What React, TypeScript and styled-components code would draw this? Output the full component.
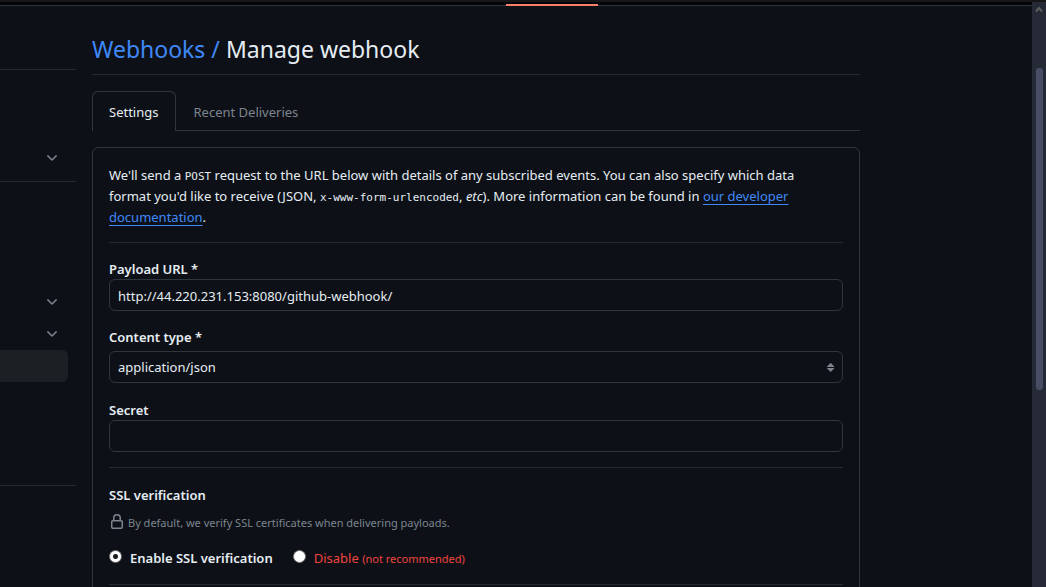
import React from "react";
import styled, { createGlobalStyle } from "styled-components";

const color = {
  bg: "#0d1117",
  text: "#e6edf3",
  muted: "#7d8590",
  border: "#30363d",
  divider: "#252a31",
  link: "#4088f7",
  danger: "#f0443e",
};

const GlobalStyle = createGlobalStyle`
  * { box-sizing: border-box; }
  body {
    margin: 0;
    background: ${color.bg};
    color: ${color.text};
    font: 13px/21px "Noto Sans", "Open Sans", sans-serif;
  }
  input, select, button { font: inherit; color: inherit; }
`;

const Window = styled.div`
  height: 100vh;
  display: flex;
  flex-direction: column;
  overflow: hidden;
`;

const BrowserEdge = styled.div`
  flex: none;
  height: 2px;
  background: #161616;
`;

const Viewport = styled.div`
  flex: 1;
  min-height: 0;
  display: flex;
`;

const Page = styled.div`
  flex: 1;
  min-width: 0;
  overflow: hidden;
`;

const RepoNav = styled.nav`
  height: 4px;
  display: flex;
  align-items: flex-end;
  background: #02040a;
  border-bottom: 1px solid ${color.border};
`;

const ActiveMark = styled.span`
  width: 92px;
  height: 2px;
  margin: 0 0 -1px 49%;
  background: #f78166;
`;

const Columns = styled.div`
  display: flex;
  gap: 16px;
`;

const Sidebar = styled.aside`
  flex: none;
  width: 76px;
`;

const NavGroup = styled.section<{ $height: number }>`
  display: flex;
  flex-direction: column;
  justify-content: flex-end;
  height: ${(p) => p.$height}px;
  border-bottom: 1px solid ${color.divider};
`;

const NavToggle = styled.button`
  display: flex;
  align-items: center;
  justify-content: flex-end;
  height: 32px;
  margin: 0 8px 0 0;
  padding: 0 8px;
  border: 0;
  background: none;
  color: ${color.muted};
`;

const NavCurrent = styled.a`
  display: block;
  height: 32px;
  margin-right: 8px;
  border-radius: 0 6px 6px 0;
  background: #1c2024;
`;

const NavSpace = styled.div<{ $height: number }>`
  height: ${(p) => p.$height}px;
`;

const Icon = styled.svg`
  flex: none;
  display: block;
  width: 16px;
  height: 16px;
  fill: currentColor;
`;

const Main = styled.main`
  flex: 1;
  min-width: 0;
  max-width: 768px;
  padding-top: 24px;
`;

const Title = styled.h1`
  margin: 0 0 16px;
  padding-bottom: 6px;
  border-bottom: 1px solid ${color.divider};
  font-size: 23px;
  line-height: 38px;
  font-weight: 400;
`;

const TitleLink = styled.a`
  color: ${color.link};
  text-decoration: none;
`;

const Tabs = styled.div`
  display: flex;
  margin-bottom: 16px;
  border-bottom: 1px solid ${color.border};
`;

const Tab = styled.button<{ $active?: boolean }>`
  height: 40px;
  margin-bottom: -1px;
  padding: 2px 17px 0 16px;
  border: 1px solid ${(p) => (p.$active ? color.border : "transparent")};
  border-bottom: 0;
  border-radius: 6px 6px 0 0;
  background: ${(p) => (p.$active ? color.bg : "transparent")};
  color: ${(p) => (p.$active ? color.text : color.muted)};
`;

const Card = styled.form`
  padding: 16px 16px 80px;
  border: 1px solid ${color.border};
  border-radius: 6px;
`;

const Intro = styled.p`
  margin: 0 0 14px;
  padding: 1px 16px 0 0;
`;

const Code = styled.code`
  font-family: "DejaVu Sans Mono", monospace;
  font-size: 11px;
  line-height: 11px;
`;

const TextLink = styled.a`
  color: ${color.link};
  text-decoration: underline;
  text-decoration-skip-ink: none;
  text-underline-offset: 3px;
`;

const Divider = styled.hr`
  height: 1px;
  margin: 15px 0;
  border: 0;
  background: ${color.divider};
  ${Intro} + & {
    margin-top: 0;
  }
`;

const Field = styled.div<{ $gap?: number }>`
  display: flex;
  flex-direction: column;
  gap: ${(p) => p.$gap ?? 0}px;
  & + & {
    margin-top: 15px;
  }
`;

const Label = styled.label`
  padding-top: 2px;
  line-height: 19px;
  font-weight: 600;
`;

const Input = styled.input`
  width: 100%;
  height: 32px;
  padding: 2px 8px 0;
  border: 1px solid ${color.border};
  border-radius: 6px;
  background: ${color.bg};
`;

const SelectBox = styled.div`
  display: grid;
  align-items: center;
  margin-bottom: 1px;
  > * {
    grid-area: 1 / 1;
  }
  > svg {
    justify-self: end;
    margin-right: 4px;
    color: ${color.muted};
    pointer-events: none;
  }
`;

const Select = styled.select`
  appearance: none;
  width: 100%;
  height: 32px;
  padding: 0 24px 0 8px;
  border: 1px solid ${color.border};
  border-radius: 6px;
  background: ${color.bg};
`;

const SectionTitle = styled.h2`
  margin: 0 0 8px;
  padding-top: 2px;
  font-size: 13px;
  line-height: 21px;
  font-weight: 600;
`;

const Note = styled.p`
  display: flex;
  align-items: flex-start;
  gap: 3px;
  margin: 0 0 16px;
  font-size: 11px;
  line-height: 18px;
  color: ${color.muted};
`;

const Options = styled.div`
  display: flex;
  gap: 20px;
`;

const Option = styled.label<{ $danger?: boolean }>`
  display: flex;
  align-items: center;
  gap: 8px;
  font-weight: ${(p) => (p.$danger ? 400 : 600)};
  color: ${(p) => (p.$danger ? color.danger : color.text)};
`;

const Radio = styled.input`
  appearance: none;
  flex: none;
  width: 13px;
  height: 13px;
  margin: 0 0 4px;
  border: 1px solid #767676;
  border-radius: 50%;
  background: #fff;
  &:checked {
    background: radial-gradient(circle, #1c1c1c 2px, #fff 3px);
  }
`;

const Small = styled.small`
  font-size: 11px;
`;

const ScrollTrack = styled.div`
  flex: none;
  display: flex;
  flex-direction: column;
  align-items: center;
  width: 14px;
  background: #262a36;
`;

const ScrollArrow = styled.svg`
  width: 8px;
  height: 8px;
  margin: 3px 0 55px;
  fill: none;
  stroke: #606060;
  stroke-width: 2;
`;

const ScrollThumb = styled.div`
  width: 7px;
  height: 55%;
  border-radius: 3px;
  background: #494d64;
`;

const Chevron = () => (
  <Icon viewBox="0 0 16 16" aria-hidden="true">
    <path d="M12.78 5.22a.749.749 0 0 1 0 1.06l-4.25 4.25a.749.749 0 0 1-1.06 0L3.22 6.28a.749.749 0 1 1 1.06-1.06L8 8.939l3.72-3.719a.749.749 0 0 1 1.06 0Z" />
  </Icon>
);

const Toggle = ({ label }: { label: string }) => (
  <NavToggle type="button" aria-label={label}>
    <Chevron />
  </NavToggle>
);

export default function App() {
  return (
    <Window>
      <GlobalStyle />
      <BrowserEdge />
      <Viewport>
        <Page>
          <RepoNav aria-label="Repository">
            <ActiveMark />
          </RepoNav>
          <Columns>
            <Sidebar>
              <NavGroup $height={64} />
              <NavGroup $height={112}>
                <Toggle label="Moderation options" />
                <NavSpace $height={7} />
              </NavGroup>
              <NavGroup $height={304}>
                <Toggle label="Rules" />
                <Toggle label="Actions" />
                <NavCurrent href="#hooks" aria-label="Webhooks" />
                <NavSpace $height={103} />
              </NavGroup>
            </Sidebar>
            <Main>
              <Title>
                <TitleLink href="#hooks">Webhooks /</TitleLink> Manage webhook
              </Title>
              <Tabs role="tablist">
                <Tab type="button" role="tab" aria-selected="true" $active>
                  Settings
                </Tab>
                <Tab type="button" role="tab" aria-selected="false">
                  Recent Deliveries
                </Tab>
              </Tabs>
              <Card>
                <Intro>
                  We'll send a <Code>POST</Code> request to the URL below with details of any
                  subscribed events. You can also specify which data format you'd like to receive
                  (JSON, <Code>x-www-form-urlencoded</Code>, <em>etc</em>). More information can be
                  found in <TextLink href="#docs">our developer documentation</TextLink>.
                </Intro>
                <Divider />
                <Field>
                  <Label htmlFor="url">Payload URL *</Label>
                  <Input id="url" defaultValue="http://44.220.231.153:8080/github-webhook/" />
                </Field>
                <Field $gap={4}>
                  <Label htmlFor="type">Content type *</Label>
                  <SelectBox>
                    <Select id="type" defaultValue="json">
                      <option value="json">application/json</option>
                    </Select>
                    <Icon viewBox="0 0 16 16" aria-hidden="true">
                      <path d="m4.074 9.427 3.396 3.396a.25.25 0 0 0 .354 0l3.396-3.396A.25.25 0 0 0 11.043 9H4.251a.25.25 0 0 0-.177.427ZM4.074 7.47 7.47 4.073a.25.25 0 0 1 .354 0L11.22 7.47a.25.25 0 0 1-.177.426H4.251a.25.25 0 0 1-.177-.426Z" />
                    </Icon>
                  </SelectBox>
                </Field>
                <Field>
                  <Label htmlFor="secret">Secret</Label>
                  <Input id="secret" />
                </Field>
                <Divider />
                <SectionTitle>SSL verification</SectionTitle>
                <Note>
                  <Icon viewBox="0 0 16 16" aria-hidden="true">
                    <path d="M4 4a4 4 0 0 1 8 0v2h.25c.966 0 1.75.784 1.75 1.75v5.5A1.75 1.75 0 0 1 12.25 15h-8.5A1.75 1.75 0 0 1 2 13.25v-5.5C2 6.784 2.784 6 3.75 6H4Zm8.25 3.5h-8.5a.25.25 0 0 0-.25.25v5.5c0 .138.112.25.25.25h8.5a.25.25 0 0 0 .25-.25v-5.5a.25.25 0 0 0-.25-.25ZM10.5 6V4a2.5 2.5 0 1 0-5 0v2Z" />
                  </Icon>
                  By default, we verify SSL certificates when delivering payloads.
                </Note>
                <Options>
                  <Option>
                    <Radio type="radio" name="ssl" defaultChecked />
                    Enable SSL verification
                  </Option>
                  <Option $danger>
                    <Radio type="radio" name="ssl" />
                    <span>
                      Disable <Small>(not recommended)</Small>
                    </span>
                  </Option>
                </Options>
                <Divider />
              </Card>
            </Main>
          </Columns>
        </Page>
        <ScrollTrack aria-hidden="true">
          <ScrollArrow viewBox="0 0 8 8">
            <path d="M1 6.5 4 3l3 3.5" />
          </ScrollArrow>
          <ScrollThumb />
        </ScrollTrack>
      </Viewport>
    </Window>
  );
}
